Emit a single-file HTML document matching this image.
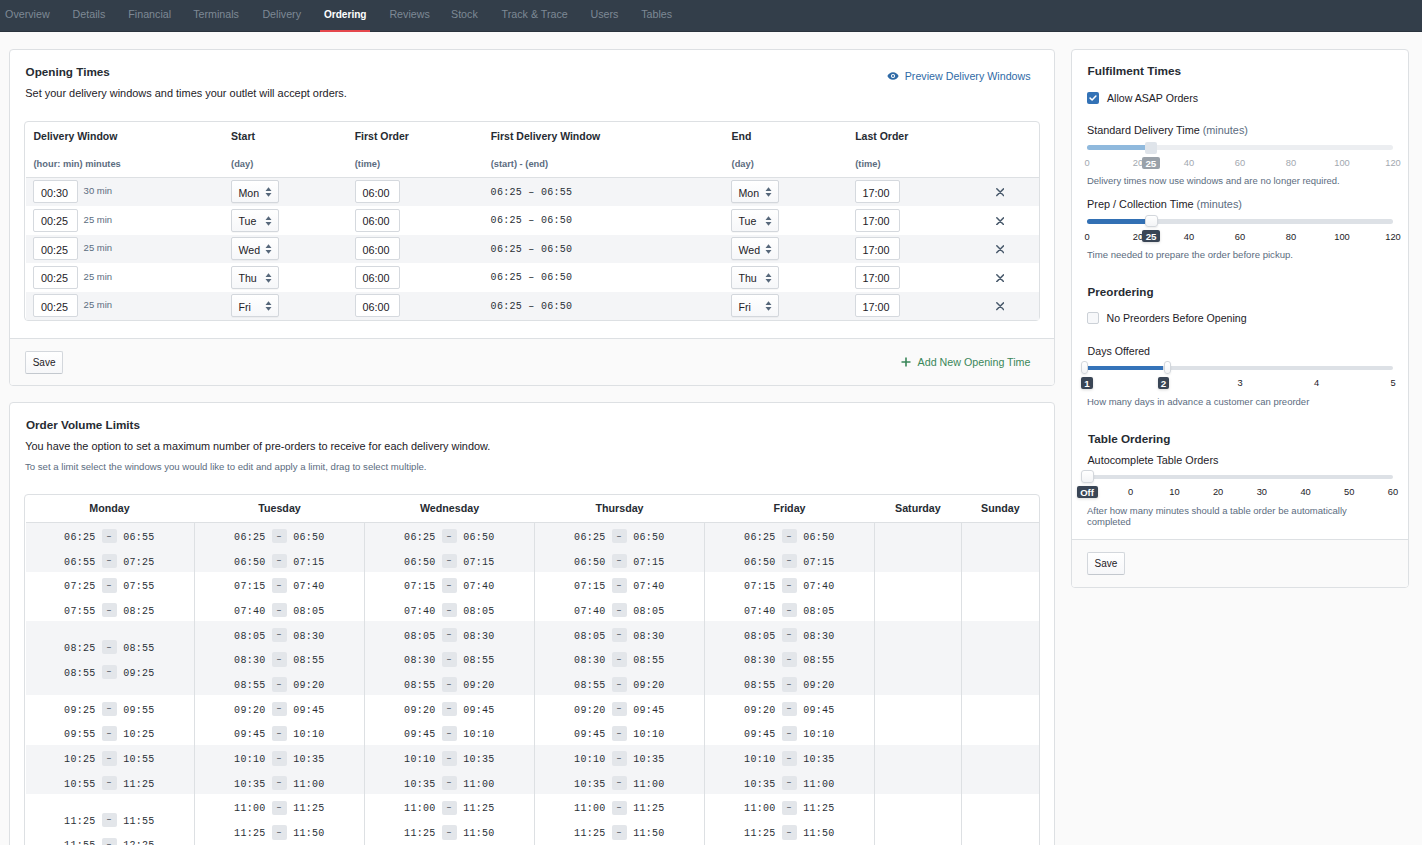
<!DOCTYPE html><html><head><meta charset="utf-8"><style>
html,body{margin:0;padding:0;}
body{width:1422px;height:845px;overflow:hidden;position:relative;background:#fafafa;font-family:"Liberation Sans",sans-serif;}
.t{position:absolute;white-space:nowrap;line-height:1em;}
.b{position:absolute;box-sizing:border-box;}
svg{position:absolute;}
</style></head><body>
<div class="b" style="left:0.00px;top:0.00px;width:1422.00px;height:32.00px;background:#333e4a;"></div>
<div class="b" style="left:0.00px;top:31.00px;width:1422.00px;height:1.00px;background:#2a333d;"></div>
<div class="t" style="left:5.10px;top:8.64px;font-size:10.7px;color:#7e8995;">Overview</div>
<div class="t" style="left:72.60px;top:8.64px;font-size:10.7px;color:#7e8995;">Details</div>
<div class="t" style="left:128.30px;top:8.64px;font-size:10.7px;color:#7e8995;">Financial</div>
<div class="t" style="left:193.20px;top:8.64px;font-size:10.7px;color:#7e8995;">Terminals</div>
<div class="t" style="left:262.40px;top:8.64px;font-size:10.7px;color:#7e8995;">Delivery</div>
<div class="t" style="left:389.40px;top:8.64px;font-size:10.7px;color:#7e8995;">Reviews</div>
<div class="t" style="left:451.00px;top:8.64px;font-size:10.7px;color:#7e8995;">Stock</div>
<div class="t" style="left:501.60px;top:8.64px;font-size:10.7px;color:#7e8995;">Track &amp; Trace</div>
<div class="t" style="left:590.50px;top:8.64px;font-size:10.7px;color:#7e8995;">Users</div>
<div class="t" style="left:641.20px;top:8.64px;font-size:10.7px;color:#7e8995;">Tables</div>
<div class="t" style="left:323.90px;top:9.75px;font-size:10.1px;color:#ffffff;font-weight:700;">Ordering</div>
<div class="b" style="left:320.00px;top:30.00px;width:50.00px;height:2.00px;background:#e5484d;"></div>
<div class="b" style="left:9.00px;top:49.00px;width:1046.00px;height:337.00px;background:#fff;border:1px solid #dde0e3;border-radius:4px;"></div>
<div class="b" style="left:10.00px;top:338.00px;width:1044.00px;height:47.00px;background:#fafafa;border-top:1px solid #dde0e3;border-radius:0 0 3px 3px;"></div>
<div class="t" style="left:25.60px;top:65.80px;font-size:11.7px;color:#262b32;font-weight:700;">Opening Times</div>
<div class="t" style="left:25.30px;top:87.63px;font-size:10.95px;color:#1d2127;">Set your delivery windows and times your outlet will accept orders.</div>
<svg style="left:887px;top:71px" width="12" height="10" viewBox="0 0 12 10"><path d="M6 1.2C3.4 1.2 1.3 3 0.4 5c0.9 2 3 3.8 5.6 3.8S10.7 7 11.6 5C10.7 3 8.6 1.2 6 1.2z" fill="#2f6aa6"/><circle cx="6" cy="5" r="2.1" fill="#fff"/><circle cx="6" cy="5" r="1.1" fill="#2f6aa6"/></svg>
<div class="t" style="left:904.70px;top:70.94px;font-size:10.7px;color:#2f6aa6;">Preview Delivery Windows</div>
<div class="b" style="left:24.20px;top:121.00px;width:1015.80px;height:200.00px;border:1px solid #dde0e3;border-radius:4px;background:#fff;"></div>
<div class="t" style="left:33.50px;top:131.41px;font-size:10.5px;color:#262b32;font-weight:700;">Delivery Window</div>
<div class="t" style="left:33.50px;top:159.93px;font-size:9.3px;color:#5b6c80;font-weight:700;">(hour: min) minutes</div>
<div class="t" style="left:231.10px;top:131.41px;font-size:10.5px;color:#262b32;font-weight:700;">Start</div>
<div class="t" style="left:231.10px;top:159.93px;font-size:9.3px;color:#5b6c80;font-weight:700;">(day)</div>
<div class="t" style="left:354.70px;top:131.41px;font-size:10.5px;color:#262b32;font-weight:700;">First Order</div>
<div class="t" style="left:354.70px;top:159.93px;font-size:9.3px;color:#5b6c80;font-weight:700;">(time)</div>
<div class="t" style="left:490.70px;top:131.41px;font-size:10.5px;color:#262b32;font-weight:700;">First Delivery Window</div>
<div class="t" style="left:490.70px;top:159.93px;font-size:9.3px;color:#5b6c80;font-weight:700;">(start) - (end)</div>
<div class="t" style="left:731.60px;top:131.41px;font-size:10.5px;color:#262b32;font-weight:700;">End</div>
<div class="t" style="left:731.60px;top:159.93px;font-size:9.3px;color:#5b6c80;font-weight:700;">(day)</div>
<div class="t" style="left:855.20px;top:131.41px;font-size:10.5px;color:#262b32;font-weight:700;">Last Order</div>
<div class="t" style="left:855.20px;top:159.93px;font-size:9.3px;color:#5b6c80;font-weight:700;">(time)</div>
<div class="b" style="left:25.50px;top:177.00px;width:1013.50px;height:1.00px;background:#dde0e3;"></div>
<div class="b" style="left:25.50px;top:178.00px;width:1013.50px;height:28.00px;background:#f4f5f7;"></div>
<div class="b" style="left:33.00px;top:180.15px;width:44.50px;height:23.00px;background:#fff;border:1px solid #d5d9de;border-radius:2px;"></div>
<div class="t" style="left:41.00px;top:187.51px;font-size:10.8px;color:#1d2127;">00:30</div>
<div class="t" style="left:83.60px;top:186.21px;font-size:9.5px;color:#5b6c80;">30 min</div>
<div class="b" style="left:231.40px;top:180.15px;width:47.50px;height:23.00px;background:linear-gradient(#fff,#f6f7f9);border:1px solid #d3d7dc;border-radius:2px;box-shadow:0 1px 0 rgba(0,0,0,0.03);"></div>
<div class="t" style="left:238.50px;top:187.68px;font-size:10.6px;color:#1d2127;">Mon</div>
<svg style="left:264.70px;top:187.25px" width="7" height="10" viewBox="0 0 7 10"><path d="M3.5 0.3L6.5 4H0.5z M3.5 9.7L6.5 6H0.5z" fill="#56677a"/></svg>
<div class="b" style="left:731.40px;top:180.15px;width:47.50px;height:23.00px;background:linear-gradient(#fff,#f6f7f9);border:1px solid #d3d7dc;border-radius:2px;box-shadow:0 1px 0 rgba(0,0,0,0.03);"></div>
<div class="t" style="left:738.50px;top:187.68px;font-size:10.6px;color:#1d2127;">Mon</div>
<svg style="left:764.70px;top:187.25px" width="7" height="10" viewBox="0 0 7 10"><path d="M3.5 0.3L6.5 4H0.5z M3.5 9.7L6.5 6H0.5z" fill="#56677a"/></svg>
<div class="b" style="left:355.20px;top:180.15px;width:44.50px;height:23.00px;background:#fff;border:1px solid #d5d9de;border-radius:2px;"></div>
<div class="t" style="left:362.50px;top:187.51px;font-size:10.8px;color:#1d2127;">06:00</div>
<div class="b" style="left:855.20px;top:180.15px;width:44.50px;height:23.00px;background:#fff;border:1px solid #d5d9de;border-radius:2px;"></div>
<div class="t" style="left:862.50px;top:187.51px;font-size:10.8px;color:#1d2127;">17:00</div>
<div class="t" style="left:490.60px;top:187.69px;font-size:10px;color:#2b3137;font-family:'Liberation Mono', monospace;letter-spacing:0.29px;">06:25 – 06:55</div>
<svg style="left:995.8px;top:188.15px" width="8.4" height="8.4" viewBox="0 0 8.4 8.4"><path d="M0.8 0.8L7.6 7.6M7.6 0.8L0.8 7.6" stroke="#48596b" stroke-width="1.5" stroke-linecap="round"/></svg>
<div class="b" style="left:33.00px;top:208.65px;width:44.50px;height:23.00px;background:#fff;border:1px solid #d5d9de;border-radius:2px;"></div>
<div class="t" style="left:41.00px;top:216.01px;font-size:10.8px;color:#1d2127;">00:25</div>
<div class="t" style="left:83.60px;top:214.71px;font-size:9.5px;color:#5b6c80;">25 min</div>
<div class="b" style="left:231.40px;top:208.65px;width:47.50px;height:23.00px;background:linear-gradient(#fff,#f6f7f9);border:1px solid #d3d7dc;border-radius:2px;box-shadow:0 1px 0 rgba(0,0,0,0.03);"></div>
<div class="t" style="left:238.50px;top:216.18px;font-size:10.6px;color:#1d2127;">Tue</div>
<svg style="left:264.70px;top:215.75px" width="7" height="10" viewBox="0 0 7 10"><path d="M3.5 0.3L6.5 4H0.5z M3.5 9.7L6.5 6H0.5z" fill="#56677a"/></svg>
<div class="b" style="left:731.40px;top:208.65px;width:47.50px;height:23.00px;background:linear-gradient(#fff,#f6f7f9);border:1px solid #d3d7dc;border-radius:2px;box-shadow:0 1px 0 rgba(0,0,0,0.03);"></div>
<div class="t" style="left:738.50px;top:216.18px;font-size:10.6px;color:#1d2127;">Tue</div>
<svg style="left:764.70px;top:215.75px" width="7" height="10" viewBox="0 0 7 10"><path d="M3.5 0.3L6.5 4H0.5z M3.5 9.7L6.5 6H0.5z" fill="#56677a"/></svg>
<div class="b" style="left:355.20px;top:208.65px;width:44.50px;height:23.00px;background:#fff;border:1px solid #d5d9de;border-radius:2px;"></div>
<div class="t" style="left:362.50px;top:216.01px;font-size:10.8px;color:#1d2127;">06:00</div>
<div class="b" style="left:855.20px;top:208.65px;width:44.50px;height:23.00px;background:#fff;border:1px solid #d5d9de;border-radius:2px;"></div>
<div class="t" style="left:862.50px;top:216.01px;font-size:10.8px;color:#1d2127;">17:00</div>
<div class="t" style="left:490.60px;top:216.19px;font-size:10px;color:#2b3137;font-family:'Liberation Mono', monospace;letter-spacing:0.29px;">06:25 – 06:50</div>
<svg style="left:995.8px;top:216.65px" width="8.4" height="8.4" viewBox="0 0 8.4 8.4"><path d="M0.8 0.8L7.6 7.6M7.6 0.8L0.8 7.6" stroke="#48596b" stroke-width="1.5" stroke-linecap="round"/></svg>
<div class="b" style="left:25.50px;top:235.00px;width:1013.50px;height:28.00px;background:#f4f5f7;"></div>
<div class="b" style="left:33.00px;top:237.15px;width:44.50px;height:23.00px;background:#fff;border:1px solid #d5d9de;border-radius:2px;"></div>
<div class="t" style="left:41.00px;top:244.51px;font-size:10.8px;color:#1d2127;">00:25</div>
<div class="t" style="left:83.60px;top:243.21px;font-size:9.5px;color:#5b6c80;">25 min</div>
<div class="b" style="left:231.40px;top:237.15px;width:47.50px;height:23.00px;background:linear-gradient(#fff,#f6f7f9);border:1px solid #d3d7dc;border-radius:2px;box-shadow:0 1px 0 rgba(0,0,0,0.03);"></div>
<div class="t" style="left:238.50px;top:244.68px;font-size:10.6px;color:#1d2127;">Wed</div>
<svg style="left:264.70px;top:244.25px" width="7" height="10" viewBox="0 0 7 10"><path d="M3.5 0.3L6.5 4H0.5z M3.5 9.7L6.5 6H0.5z" fill="#56677a"/></svg>
<div class="b" style="left:731.40px;top:237.15px;width:47.50px;height:23.00px;background:linear-gradient(#fff,#f6f7f9);border:1px solid #d3d7dc;border-radius:2px;box-shadow:0 1px 0 rgba(0,0,0,0.03);"></div>
<div class="t" style="left:738.50px;top:244.68px;font-size:10.6px;color:#1d2127;">Wed</div>
<svg style="left:764.70px;top:244.25px" width="7" height="10" viewBox="0 0 7 10"><path d="M3.5 0.3L6.5 4H0.5z M3.5 9.7L6.5 6H0.5z" fill="#56677a"/></svg>
<div class="b" style="left:355.20px;top:237.15px;width:44.50px;height:23.00px;background:#fff;border:1px solid #d5d9de;border-radius:2px;"></div>
<div class="t" style="left:362.50px;top:244.51px;font-size:10.8px;color:#1d2127;">06:00</div>
<div class="b" style="left:855.20px;top:237.15px;width:44.50px;height:23.00px;background:#fff;border:1px solid #d5d9de;border-radius:2px;"></div>
<div class="t" style="left:862.50px;top:244.51px;font-size:10.8px;color:#1d2127;">17:00</div>
<div class="t" style="left:490.60px;top:244.69px;font-size:10px;color:#2b3137;font-family:'Liberation Mono', monospace;letter-spacing:0.29px;">06:25 – 06:50</div>
<svg style="left:995.8px;top:245.15px" width="8.4" height="8.4" viewBox="0 0 8.4 8.4"><path d="M0.8 0.8L7.6 7.6M7.6 0.8L0.8 7.6" stroke="#48596b" stroke-width="1.5" stroke-linecap="round"/></svg>
<div class="b" style="left:33.00px;top:265.65px;width:44.50px;height:23.00px;background:#fff;border:1px solid #d5d9de;border-radius:2px;"></div>
<div class="t" style="left:41.00px;top:273.01px;font-size:10.8px;color:#1d2127;">00:25</div>
<div class="t" style="left:83.60px;top:271.71px;font-size:9.5px;color:#5b6c80;">25 min</div>
<div class="b" style="left:231.40px;top:265.65px;width:47.50px;height:23.00px;background:linear-gradient(#fff,#f6f7f9);border:1px solid #d3d7dc;border-radius:2px;box-shadow:0 1px 0 rgba(0,0,0,0.03);"></div>
<div class="t" style="left:238.50px;top:273.18px;font-size:10.6px;color:#1d2127;">Thu</div>
<svg style="left:264.70px;top:272.75px" width="7" height="10" viewBox="0 0 7 10"><path d="M3.5 0.3L6.5 4H0.5z M3.5 9.7L6.5 6H0.5z" fill="#56677a"/></svg>
<div class="b" style="left:731.40px;top:265.65px;width:47.50px;height:23.00px;background:linear-gradient(#fff,#f6f7f9);border:1px solid #d3d7dc;border-radius:2px;box-shadow:0 1px 0 rgba(0,0,0,0.03);"></div>
<div class="t" style="left:738.50px;top:273.18px;font-size:10.6px;color:#1d2127;">Thu</div>
<svg style="left:764.70px;top:272.75px" width="7" height="10" viewBox="0 0 7 10"><path d="M3.5 0.3L6.5 4H0.5z M3.5 9.7L6.5 6H0.5z" fill="#56677a"/></svg>
<div class="b" style="left:355.20px;top:265.65px;width:44.50px;height:23.00px;background:#fff;border:1px solid #d5d9de;border-radius:2px;"></div>
<div class="t" style="left:362.50px;top:273.01px;font-size:10.8px;color:#1d2127;">06:00</div>
<div class="b" style="left:855.20px;top:265.65px;width:44.50px;height:23.00px;background:#fff;border:1px solid #d5d9de;border-radius:2px;"></div>
<div class="t" style="left:862.50px;top:273.01px;font-size:10.8px;color:#1d2127;">17:00</div>
<div class="t" style="left:490.60px;top:273.19px;font-size:10px;color:#2b3137;font-family:'Liberation Mono', monospace;letter-spacing:0.29px;">06:25 – 06:50</div>
<svg style="left:995.8px;top:273.65px" width="8.4" height="8.4" viewBox="0 0 8.4 8.4"><path d="M0.8 0.8L7.6 7.6M7.6 0.8L0.8 7.6" stroke="#48596b" stroke-width="1.5" stroke-linecap="round"/></svg>
<div class="b" style="left:25.50px;top:292.00px;width:1013.50px;height:28.00px;background:#f4f5f7;"></div>
<div class="b" style="left:33.00px;top:294.15px;width:44.50px;height:23.00px;background:#fff;border:1px solid #d5d9de;border-radius:2px;"></div>
<div class="t" style="left:41.00px;top:301.51px;font-size:10.8px;color:#1d2127;">00:25</div>
<div class="t" style="left:83.60px;top:300.21px;font-size:9.5px;color:#5b6c80;">25 min</div>
<div class="b" style="left:231.40px;top:294.15px;width:47.50px;height:23.00px;background:linear-gradient(#fff,#f6f7f9);border:1px solid #d3d7dc;border-radius:2px;box-shadow:0 1px 0 rgba(0,0,0,0.03);"></div>
<div class="t" style="left:238.50px;top:301.68px;font-size:10.6px;color:#1d2127;">Fri</div>
<svg style="left:264.70px;top:301.25px" width="7" height="10" viewBox="0 0 7 10"><path d="M3.5 0.3L6.5 4H0.5z M3.5 9.7L6.5 6H0.5z" fill="#56677a"/></svg>
<div class="b" style="left:731.40px;top:294.15px;width:47.50px;height:23.00px;background:linear-gradient(#fff,#f6f7f9);border:1px solid #d3d7dc;border-radius:2px;box-shadow:0 1px 0 rgba(0,0,0,0.03);"></div>
<div class="t" style="left:738.50px;top:301.68px;font-size:10.6px;color:#1d2127;">Fri</div>
<svg style="left:764.70px;top:301.25px" width="7" height="10" viewBox="0 0 7 10"><path d="M3.5 0.3L6.5 4H0.5z M3.5 9.7L6.5 6H0.5z" fill="#56677a"/></svg>
<div class="b" style="left:355.20px;top:294.15px;width:44.50px;height:23.00px;background:#fff;border:1px solid #d5d9de;border-radius:2px;"></div>
<div class="t" style="left:362.50px;top:301.51px;font-size:10.8px;color:#1d2127;">06:00</div>
<div class="b" style="left:855.20px;top:294.15px;width:44.50px;height:23.00px;background:#fff;border:1px solid #d5d9de;border-radius:2px;"></div>
<div class="t" style="left:862.50px;top:301.51px;font-size:10.8px;color:#1d2127;">17:00</div>
<div class="t" style="left:490.60px;top:301.69px;font-size:10px;color:#2b3137;font-family:'Liberation Mono', monospace;letter-spacing:0.29px;">06:25 – 06:50</div>
<svg style="left:995.8px;top:302.15px" width="8.4" height="8.4" viewBox="0 0 8.4 8.4"><path d="M0.8 0.8L7.6 7.6M7.6 0.8L0.8 7.6" stroke="#48596b" stroke-width="1.5" stroke-linecap="round"/></svg>
<div class="b" style="left:25.00px;top:351.00px;width:37.80px;height:22.50px;background:linear-gradient(#fff,#f6f7f9);border:1px solid #d3d7dc;border-bottom-color:#c3c8ce;border-radius:2px;"></div>
<div class="t" style="left:32.70px;top:357.54px;font-size:10px;color:#1d2127;">Save</div>
<svg style="left:901px;top:357px" width="10" height="10" viewBox="0 0 10 10"><path d="M5 0.5V9.5M0.5 5H9.5" stroke="#3a8759" stroke-width="1.6"/></svg>
<div class="t" style="left:917.60px;top:356.74px;font-size:10.7px;color:#3a8759;">Add New Opening Time</div>
<div class="b" style="left:9.00px;top:402.00px;width:1046.00px;height:498.00px;background:#fff;border:1px solid #dde0e3;border-radius:4px;"></div>
<div class="t" style="left:25.90px;top:419.00px;font-size:11.7px;color:#262b32;font-weight:700;">Order Volume Limits</div>
<div class="t" style="left:25.20px;top:440.97px;font-size:10.9px;color:#1d2127;">You have the option to set a maximum number of pre-orders to receive for each delivery window.</div>
<div class="t" style="left:25.00px;top:462.37px;font-size:9.6px;color:#5b6c80;">To set a limit select the windows you would like to edit and apply a limit, drag to select multiple.</div>
<div class="b" style="left:24.20px;top:493.50px;width:1015.80px;height:406.50px;border:1px solid #dde0e3;border-radius:4px;background:#fff;"></div>
<div class="t" style="left:24.50px;width:170.00px;text-align:center;top:502.94px;font-size:10.7px;color:#262b32;font-weight:700;">Monday</div>
<div class="t" style="left:194.50px;width:170.00px;text-align:center;top:502.94px;font-size:10.7px;color:#262b32;font-weight:700;">Tuesday</div>
<div class="t" style="left:364.50px;width:170.00px;text-align:center;top:502.94px;font-size:10.7px;color:#262b32;font-weight:700;">Wednesday</div>
<div class="t" style="left:534.50px;width:170.00px;text-align:center;top:502.94px;font-size:10.7px;color:#262b32;font-weight:700;">Thursday</div>
<div class="t" style="left:704.50px;width:170.00px;text-align:center;top:502.94px;font-size:10.7px;color:#262b32;font-weight:700;">Friday</div>
<div class="t" style="left:874.50px;width:86.80px;text-align:center;top:502.94px;font-size:10.7px;color:#262b32;font-weight:700;">Saturday</div>
<div class="t" style="left:961.30px;width:78.20px;text-align:center;top:502.94px;font-size:10.7px;color:#262b32;font-weight:700;">Sunday</div>
<div class="b" style="left:25.50px;top:522.00px;width:1013.50px;height:1.00px;background:#dde0e3;"></div>
<div class="b" style="left:25.50px;top:522.60px;width:1013.50px;height:49.36px;background:#f4f5f7;"></div>
<div class="b" style="left:102.25px;top:529.04px;width:14.50px;height:14.40px;background:#e3e6ea;border-radius:2px;"></div>
<div class="t" style="left:106.35px;top:532.55px;font-size:9px;color:#3b4450;font-family:'Liberation Mono', monospace;">–</div>
<div class="t" style="left:64.10px;top:532.98px;font-size:10px;color:#2b3137;font-family:'Liberation Mono', monospace;letter-spacing:0.29px;">06:25</div>
<div class="t" style="left:123.20px;top:532.98px;font-size:10px;color:#2b3137;font-family:'Liberation Mono', monospace;letter-spacing:0.29px;">06:55</div>
<div class="b" style="left:102.25px;top:553.72px;width:14.50px;height:14.40px;background:#e3e6ea;border-radius:2px;"></div>
<div class="t" style="left:106.35px;top:557.23px;font-size:9px;color:#3b4450;font-family:'Liberation Mono', monospace;">–</div>
<div class="t" style="left:64.10px;top:557.66px;font-size:10px;color:#2b3137;font-family:'Liberation Mono', monospace;letter-spacing:0.29px;">06:55</div>
<div class="t" style="left:123.20px;top:557.66px;font-size:10px;color:#2b3137;font-family:'Liberation Mono', monospace;letter-spacing:0.29px;">07:25</div>
<div class="b" style="left:272.25px;top:529.04px;width:14.50px;height:14.40px;background:#e3e6ea;border-radius:2px;"></div>
<div class="t" style="left:276.35px;top:532.55px;font-size:9px;color:#3b4450;font-family:'Liberation Mono', monospace;">–</div>
<div class="t" style="left:234.10px;top:532.98px;font-size:10px;color:#2b3137;font-family:'Liberation Mono', monospace;letter-spacing:0.29px;">06:25</div>
<div class="t" style="left:293.20px;top:532.98px;font-size:10px;color:#2b3137;font-family:'Liberation Mono', monospace;letter-spacing:0.29px;">06:50</div>
<div class="b" style="left:272.25px;top:553.72px;width:14.50px;height:14.40px;background:#e3e6ea;border-radius:2px;"></div>
<div class="t" style="left:276.35px;top:557.23px;font-size:9px;color:#3b4450;font-family:'Liberation Mono', monospace;">–</div>
<div class="t" style="left:234.10px;top:557.66px;font-size:10px;color:#2b3137;font-family:'Liberation Mono', monospace;letter-spacing:0.29px;">06:50</div>
<div class="t" style="left:293.20px;top:557.66px;font-size:10px;color:#2b3137;font-family:'Liberation Mono', monospace;letter-spacing:0.29px;">07:15</div>
<div class="b" style="left:442.25px;top:529.04px;width:14.50px;height:14.40px;background:#e3e6ea;border-radius:2px;"></div>
<div class="t" style="left:446.35px;top:532.55px;font-size:9px;color:#3b4450;font-family:'Liberation Mono', monospace;">–</div>
<div class="t" style="left:404.10px;top:532.98px;font-size:10px;color:#2b3137;font-family:'Liberation Mono', monospace;letter-spacing:0.29px;">06:25</div>
<div class="t" style="left:463.20px;top:532.98px;font-size:10px;color:#2b3137;font-family:'Liberation Mono', monospace;letter-spacing:0.29px;">06:50</div>
<div class="b" style="left:442.25px;top:553.72px;width:14.50px;height:14.40px;background:#e3e6ea;border-radius:2px;"></div>
<div class="t" style="left:446.35px;top:557.23px;font-size:9px;color:#3b4450;font-family:'Liberation Mono', monospace;">–</div>
<div class="t" style="left:404.10px;top:557.66px;font-size:10px;color:#2b3137;font-family:'Liberation Mono', monospace;letter-spacing:0.29px;">06:50</div>
<div class="t" style="left:463.20px;top:557.66px;font-size:10px;color:#2b3137;font-family:'Liberation Mono', monospace;letter-spacing:0.29px;">07:15</div>
<div class="b" style="left:612.25px;top:529.04px;width:14.50px;height:14.40px;background:#e3e6ea;border-radius:2px;"></div>
<div class="t" style="left:616.35px;top:532.55px;font-size:9px;color:#3b4450;font-family:'Liberation Mono', monospace;">–</div>
<div class="t" style="left:574.10px;top:532.98px;font-size:10px;color:#2b3137;font-family:'Liberation Mono', monospace;letter-spacing:0.29px;">06:25</div>
<div class="t" style="left:633.20px;top:532.98px;font-size:10px;color:#2b3137;font-family:'Liberation Mono', monospace;letter-spacing:0.29px;">06:50</div>
<div class="b" style="left:612.25px;top:553.72px;width:14.50px;height:14.40px;background:#e3e6ea;border-radius:2px;"></div>
<div class="t" style="left:616.35px;top:557.23px;font-size:9px;color:#3b4450;font-family:'Liberation Mono', monospace;">–</div>
<div class="t" style="left:574.10px;top:557.66px;font-size:10px;color:#2b3137;font-family:'Liberation Mono', monospace;letter-spacing:0.29px;">06:50</div>
<div class="t" style="left:633.20px;top:557.66px;font-size:10px;color:#2b3137;font-family:'Liberation Mono', monospace;letter-spacing:0.29px;">07:15</div>
<div class="b" style="left:782.25px;top:529.04px;width:14.50px;height:14.40px;background:#e3e6ea;border-radius:2px;"></div>
<div class="t" style="left:786.35px;top:532.55px;font-size:9px;color:#3b4450;font-family:'Liberation Mono', monospace;">–</div>
<div class="t" style="left:744.10px;top:532.98px;font-size:10px;color:#2b3137;font-family:'Liberation Mono', monospace;letter-spacing:0.29px;">06:25</div>
<div class="t" style="left:803.20px;top:532.98px;font-size:10px;color:#2b3137;font-family:'Liberation Mono', monospace;letter-spacing:0.29px;">06:50</div>
<div class="b" style="left:782.25px;top:553.72px;width:14.50px;height:14.40px;background:#e3e6ea;border-radius:2px;"></div>
<div class="t" style="left:786.35px;top:557.23px;font-size:9px;color:#3b4450;font-family:'Liberation Mono', monospace;">–</div>
<div class="t" style="left:744.10px;top:557.66px;font-size:10px;color:#2b3137;font-family:'Liberation Mono', monospace;letter-spacing:0.29px;">06:50</div>
<div class="t" style="left:803.20px;top:557.66px;font-size:10px;color:#2b3137;font-family:'Liberation Mono', monospace;letter-spacing:0.29px;">07:15</div>
<div class="b" style="left:102.25px;top:578.40px;width:14.50px;height:14.40px;background:#e3e6ea;border-radius:2px;"></div>
<div class="t" style="left:106.35px;top:581.91px;font-size:9px;color:#3b4450;font-family:'Liberation Mono', monospace;">–</div>
<div class="t" style="left:64.10px;top:582.34px;font-size:10px;color:#2b3137;font-family:'Liberation Mono', monospace;letter-spacing:0.29px;">07:25</div>
<div class="t" style="left:123.20px;top:582.34px;font-size:10px;color:#2b3137;font-family:'Liberation Mono', monospace;letter-spacing:0.29px;">07:55</div>
<div class="b" style="left:102.25px;top:603.08px;width:14.50px;height:14.40px;background:#e3e6ea;border-radius:2px;"></div>
<div class="t" style="left:106.35px;top:606.59px;font-size:9px;color:#3b4450;font-family:'Liberation Mono', monospace;">–</div>
<div class="t" style="left:64.10px;top:607.02px;font-size:10px;color:#2b3137;font-family:'Liberation Mono', monospace;letter-spacing:0.29px;">07:55</div>
<div class="t" style="left:123.20px;top:607.02px;font-size:10px;color:#2b3137;font-family:'Liberation Mono', monospace;letter-spacing:0.29px;">08:25</div>
<div class="b" style="left:272.25px;top:578.40px;width:14.50px;height:14.40px;background:#e3e6ea;border-radius:2px;"></div>
<div class="t" style="left:276.35px;top:581.91px;font-size:9px;color:#3b4450;font-family:'Liberation Mono', monospace;">–</div>
<div class="t" style="left:234.10px;top:582.34px;font-size:10px;color:#2b3137;font-family:'Liberation Mono', monospace;letter-spacing:0.29px;">07:15</div>
<div class="t" style="left:293.20px;top:582.34px;font-size:10px;color:#2b3137;font-family:'Liberation Mono', monospace;letter-spacing:0.29px;">07:40</div>
<div class="b" style="left:272.25px;top:603.08px;width:14.50px;height:14.40px;background:#e3e6ea;border-radius:2px;"></div>
<div class="t" style="left:276.35px;top:606.59px;font-size:9px;color:#3b4450;font-family:'Liberation Mono', monospace;">–</div>
<div class="t" style="left:234.10px;top:607.02px;font-size:10px;color:#2b3137;font-family:'Liberation Mono', monospace;letter-spacing:0.29px;">07:40</div>
<div class="t" style="left:293.20px;top:607.02px;font-size:10px;color:#2b3137;font-family:'Liberation Mono', monospace;letter-spacing:0.29px;">08:05</div>
<div class="b" style="left:442.25px;top:578.40px;width:14.50px;height:14.40px;background:#e3e6ea;border-radius:2px;"></div>
<div class="t" style="left:446.35px;top:581.91px;font-size:9px;color:#3b4450;font-family:'Liberation Mono', monospace;">–</div>
<div class="t" style="left:404.10px;top:582.34px;font-size:10px;color:#2b3137;font-family:'Liberation Mono', monospace;letter-spacing:0.29px;">07:15</div>
<div class="t" style="left:463.20px;top:582.34px;font-size:10px;color:#2b3137;font-family:'Liberation Mono', monospace;letter-spacing:0.29px;">07:40</div>
<div class="b" style="left:442.25px;top:603.08px;width:14.50px;height:14.40px;background:#e3e6ea;border-radius:2px;"></div>
<div class="t" style="left:446.35px;top:606.59px;font-size:9px;color:#3b4450;font-family:'Liberation Mono', monospace;">–</div>
<div class="t" style="left:404.10px;top:607.02px;font-size:10px;color:#2b3137;font-family:'Liberation Mono', monospace;letter-spacing:0.29px;">07:40</div>
<div class="t" style="left:463.20px;top:607.02px;font-size:10px;color:#2b3137;font-family:'Liberation Mono', monospace;letter-spacing:0.29px;">08:05</div>
<div class="b" style="left:612.25px;top:578.40px;width:14.50px;height:14.40px;background:#e3e6ea;border-radius:2px;"></div>
<div class="t" style="left:616.35px;top:581.91px;font-size:9px;color:#3b4450;font-family:'Liberation Mono', monospace;">–</div>
<div class="t" style="left:574.10px;top:582.34px;font-size:10px;color:#2b3137;font-family:'Liberation Mono', monospace;letter-spacing:0.29px;">07:15</div>
<div class="t" style="left:633.20px;top:582.34px;font-size:10px;color:#2b3137;font-family:'Liberation Mono', monospace;letter-spacing:0.29px;">07:40</div>
<div class="b" style="left:612.25px;top:603.08px;width:14.50px;height:14.40px;background:#e3e6ea;border-radius:2px;"></div>
<div class="t" style="left:616.35px;top:606.59px;font-size:9px;color:#3b4450;font-family:'Liberation Mono', monospace;">–</div>
<div class="t" style="left:574.10px;top:607.02px;font-size:10px;color:#2b3137;font-family:'Liberation Mono', monospace;letter-spacing:0.29px;">07:40</div>
<div class="t" style="left:633.20px;top:607.02px;font-size:10px;color:#2b3137;font-family:'Liberation Mono', monospace;letter-spacing:0.29px;">08:05</div>
<div class="b" style="left:782.25px;top:578.40px;width:14.50px;height:14.40px;background:#e3e6ea;border-radius:2px;"></div>
<div class="t" style="left:786.35px;top:581.91px;font-size:9px;color:#3b4450;font-family:'Liberation Mono', monospace;">–</div>
<div class="t" style="left:744.10px;top:582.34px;font-size:10px;color:#2b3137;font-family:'Liberation Mono', monospace;letter-spacing:0.29px;">07:15</div>
<div class="t" style="left:803.20px;top:582.34px;font-size:10px;color:#2b3137;font-family:'Liberation Mono', monospace;letter-spacing:0.29px;">07:40</div>
<div class="b" style="left:782.25px;top:603.08px;width:14.50px;height:14.40px;background:#e3e6ea;border-radius:2px;"></div>
<div class="t" style="left:786.35px;top:606.59px;font-size:9px;color:#3b4450;font-family:'Liberation Mono', monospace;">–</div>
<div class="t" style="left:744.10px;top:607.02px;font-size:10px;color:#2b3137;font-family:'Liberation Mono', monospace;letter-spacing:0.29px;">07:40</div>
<div class="t" style="left:803.20px;top:607.02px;font-size:10px;color:#2b3137;font-family:'Liberation Mono', monospace;letter-spacing:0.29px;">08:05</div>
<div class="b" style="left:25.50px;top:621.32px;width:1013.50px;height:74.04px;background:#f4f5f7;"></div>
<div class="b" style="left:102.25px;top:640.10px;width:14.50px;height:14.40px;background:#e3e6ea;border-radius:2px;"></div>
<div class="t" style="left:106.35px;top:643.61px;font-size:9px;color:#3b4450;font-family:'Liberation Mono', monospace;">–</div>
<div class="t" style="left:64.10px;top:644.04px;font-size:10px;color:#2b3137;font-family:'Liberation Mono', monospace;letter-spacing:0.29px;">08:25</div>
<div class="t" style="left:123.20px;top:644.04px;font-size:10px;color:#2b3137;font-family:'Liberation Mono', monospace;letter-spacing:0.29px;">08:55</div>
<div class="b" style="left:102.25px;top:664.78px;width:14.50px;height:14.40px;background:#e3e6ea;border-radius:2px;"></div>
<div class="t" style="left:106.35px;top:668.29px;font-size:9px;color:#3b4450;font-family:'Liberation Mono', monospace;">–</div>
<div class="t" style="left:64.10px;top:668.72px;font-size:10px;color:#2b3137;font-family:'Liberation Mono', monospace;letter-spacing:0.29px;">08:55</div>
<div class="t" style="left:123.20px;top:668.72px;font-size:10px;color:#2b3137;font-family:'Liberation Mono', monospace;letter-spacing:0.29px;">09:25</div>
<div class="b" style="left:272.25px;top:627.76px;width:14.50px;height:14.40px;background:#e3e6ea;border-radius:2px;"></div>
<div class="t" style="left:276.35px;top:631.27px;font-size:9px;color:#3b4450;font-family:'Liberation Mono', monospace;">–</div>
<div class="t" style="left:234.10px;top:631.70px;font-size:10px;color:#2b3137;font-family:'Liberation Mono', monospace;letter-spacing:0.29px;">08:05</div>
<div class="t" style="left:293.20px;top:631.70px;font-size:10px;color:#2b3137;font-family:'Liberation Mono', monospace;letter-spacing:0.29px;">08:30</div>
<div class="b" style="left:272.25px;top:652.44px;width:14.50px;height:14.40px;background:#e3e6ea;border-radius:2px;"></div>
<div class="t" style="left:276.35px;top:655.95px;font-size:9px;color:#3b4450;font-family:'Liberation Mono', monospace;">–</div>
<div class="t" style="left:234.10px;top:656.38px;font-size:10px;color:#2b3137;font-family:'Liberation Mono', monospace;letter-spacing:0.29px;">08:30</div>
<div class="t" style="left:293.20px;top:656.38px;font-size:10px;color:#2b3137;font-family:'Liberation Mono', monospace;letter-spacing:0.29px;">08:55</div>
<div class="b" style="left:272.25px;top:677.12px;width:14.50px;height:14.40px;background:#e3e6ea;border-radius:2px;"></div>
<div class="t" style="left:276.35px;top:680.63px;font-size:9px;color:#3b4450;font-family:'Liberation Mono', monospace;">–</div>
<div class="t" style="left:234.10px;top:681.06px;font-size:10px;color:#2b3137;font-family:'Liberation Mono', monospace;letter-spacing:0.29px;">08:55</div>
<div class="t" style="left:293.20px;top:681.06px;font-size:10px;color:#2b3137;font-family:'Liberation Mono', monospace;letter-spacing:0.29px;">09:20</div>
<div class="b" style="left:442.25px;top:627.76px;width:14.50px;height:14.40px;background:#e3e6ea;border-radius:2px;"></div>
<div class="t" style="left:446.35px;top:631.27px;font-size:9px;color:#3b4450;font-family:'Liberation Mono', monospace;">–</div>
<div class="t" style="left:404.10px;top:631.70px;font-size:10px;color:#2b3137;font-family:'Liberation Mono', monospace;letter-spacing:0.29px;">08:05</div>
<div class="t" style="left:463.20px;top:631.70px;font-size:10px;color:#2b3137;font-family:'Liberation Mono', monospace;letter-spacing:0.29px;">08:30</div>
<div class="b" style="left:442.25px;top:652.44px;width:14.50px;height:14.40px;background:#e3e6ea;border-radius:2px;"></div>
<div class="t" style="left:446.35px;top:655.95px;font-size:9px;color:#3b4450;font-family:'Liberation Mono', monospace;">–</div>
<div class="t" style="left:404.10px;top:656.38px;font-size:10px;color:#2b3137;font-family:'Liberation Mono', monospace;letter-spacing:0.29px;">08:30</div>
<div class="t" style="left:463.20px;top:656.38px;font-size:10px;color:#2b3137;font-family:'Liberation Mono', monospace;letter-spacing:0.29px;">08:55</div>
<div class="b" style="left:442.25px;top:677.12px;width:14.50px;height:14.40px;background:#e3e6ea;border-radius:2px;"></div>
<div class="t" style="left:446.35px;top:680.63px;font-size:9px;color:#3b4450;font-family:'Liberation Mono', monospace;">–</div>
<div class="t" style="left:404.10px;top:681.06px;font-size:10px;color:#2b3137;font-family:'Liberation Mono', monospace;letter-spacing:0.29px;">08:55</div>
<div class="t" style="left:463.20px;top:681.06px;font-size:10px;color:#2b3137;font-family:'Liberation Mono', monospace;letter-spacing:0.29px;">09:20</div>
<div class="b" style="left:612.25px;top:627.76px;width:14.50px;height:14.40px;background:#e3e6ea;border-radius:2px;"></div>
<div class="t" style="left:616.35px;top:631.27px;font-size:9px;color:#3b4450;font-family:'Liberation Mono', monospace;">–</div>
<div class="t" style="left:574.10px;top:631.70px;font-size:10px;color:#2b3137;font-family:'Liberation Mono', monospace;letter-spacing:0.29px;">08:05</div>
<div class="t" style="left:633.20px;top:631.70px;font-size:10px;color:#2b3137;font-family:'Liberation Mono', monospace;letter-spacing:0.29px;">08:30</div>
<div class="b" style="left:612.25px;top:652.44px;width:14.50px;height:14.40px;background:#e3e6ea;border-radius:2px;"></div>
<div class="t" style="left:616.35px;top:655.95px;font-size:9px;color:#3b4450;font-family:'Liberation Mono', monospace;">–</div>
<div class="t" style="left:574.10px;top:656.38px;font-size:10px;color:#2b3137;font-family:'Liberation Mono', monospace;letter-spacing:0.29px;">08:30</div>
<div class="t" style="left:633.20px;top:656.38px;font-size:10px;color:#2b3137;font-family:'Liberation Mono', monospace;letter-spacing:0.29px;">08:55</div>
<div class="b" style="left:612.25px;top:677.12px;width:14.50px;height:14.40px;background:#e3e6ea;border-radius:2px;"></div>
<div class="t" style="left:616.35px;top:680.63px;font-size:9px;color:#3b4450;font-family:'Liberation Mono', monospace;">–</div>
<div class="t" style="left:574.10px;top:681.06px;font-size:10px;color:#2b3137;font-family:'Liberation Mono', monospace;letter-spacing:0.29px;">08:55</div>
<div class="t" style="left:633.20px;top:681.06px;font-size:10px;color:#2b3137;font-family:'Liberation Mono', monospace;letter-spacing:0.29px;">09:20</div>
<div class="b" style="left:782.25px;top:627.76px;width:14.50px;height:14.40px;background:#e3e6ea;border-radius:2px;"></div>
<div class="t" style="left:786.35px;top:631.27px;font-size:9px;color:#3b4450;font-family:'Liberation Mono', monospace;">–</div>
<div class="t" style="left:744.10px;top:631.70px;font-size:10px;color:#2b3137;font-family:'Liberation Mono', monospace;letter-spacing:0.29px;">08:05</div>
<div class="t" style="left:803.20px;top:631.70px;font-size:10px;color:#2b3137;font-family:'Liberation Mono', monospace;letter-spacing:0.29px;">08:30</div>
<div class="b" style="left:782.25px;top:652.44px;width:14.50px;height:14.40px;background:#e3e6ea;border-radius:2px;"></div>
<div class="t" style="left:786.35px;top:655.95px;font-size:9px;color:#3b4450;font-family:'Liberation Mono', monospace;">–</div>
<div class="t" style="left:744.10px;top:656.38px;font-size:10px;color:#2b3137;font-family:'Liberation Mono', monospace;letter-spacing:0.29px;">08:30</div>
<div class="t" style="left:803.20px;top:656.38px;font-size:10px;color:#2b3137;font-family:'Liberation Mono', monospace;letter-spacing:0.29px;">08:55</div>
<div class="b" style="left:782.25px;top:677.12px;width:14.50px;height:14.40px;background:#e3e6ea;border-radius:2px;"></div>
<div class="t" style="left:786.35px;top:680.63px;font-size:9px;color:#3b4450;font-family:'Liberation Mono', monospace;">–</div>
<div class="t" style="left:744.10px;top:681.06px;font-size:10px;color:#2b3137;font-family:'Liberation Mono', monospace;letter-spacing:0.29px;">08:55</div>
<div class="t" style="left:803.20px;top:681.06px;font-size:10px;color:#2b3137;font-family:'Liberation Mono', monospace;letter-spacing:0.29px;">09:20</div>
<div class="b" style="left:102.25px;top:701.80px;width:14.50px;height:14.40px;background:#e3e6ea;border-radius:2px;"></div>
<div class="t" style="left:106.35px;top:705.31px;font-size:9px;color:#3b4450;font-family:'Liberation Mono', monospace;">–</div>
<div class="t" style="left:64.10px;top:705.74px;font-size:10px;color:#2b3137;font-family:'Liberation Mono', monospace;letter-spacing:0.29px;">09:25</div>
<div class="t" style="left:123.20px;top:705.74px;font-size:10px;color:#2b3137;font-family:'Liberation Mono', monospace;letter-spacing:0.29px;">09:55</div>
<div class="b" style="left:102.25px;top:726.48px;width:14.50px;height:14.40px;background:#e3e6ea;border-radius:2px;"></div>
<div class="t" style="left:106.35px;top:729.99px;font-size:9px;color:#3b4450;font-family:'Liberation Mono', monospace;">–</div>
<div class="t" style="left:64.10px;top:730.42px;font-size:10px;color:#2b3137;font-family:'Liberation Mono', monospace;letter-spacing:0.29px;">09:55</div>
<div class="t" style="left:123.20px;top:730.42px;font-size:10px;color:#2b3137;font-family:'Liberation Mono', monospace;letter-spacing:0.29px;">10:25</div>
<div class="b" style="left:272.25px;top:701.80px;width:14.50px;height:14.40px;background:#e3e6ea;border-radius:2px;"></div>
<div class="t" style="left:276.35px;top:705.31px;font-size:9px;color:#3b4450;font-family:'Liberation Mono', monospace;">–</div>
<div class="t" style="left:234.10px;top:705.74px;font-size:10px;color:#2b3137;font-family:'Liberation Mono', monospace;letter-spacing:0.29px;">09:20</div>
<div class="t" style="left:293.20px;top:705.74px;font-size:10px;color:#2b3137;font-family:'Liberation Mono', monospace;letter-spacing:0.29px;">09:45</div>
<div class="b" style="left:272.25px;top:726.48px;width:14.50px;height:14.40px;background:#e3e6ea;border-radius:2px;"></div>
<div class="t" style="left:276.35px;top:729.99px;font-size:9px;color:#3b4450;font-family:'Liberation Mono', monospace;">–</div>
<div class="t" style="left:234.10px;top:730.42px;font-size:10px;color:#2b3137;font-family:'Liberation Mono', monospace;letter-spacing:0.29px;">09:45</div>
<div class="t" style="left:293.20px;top:730.42px;font-size:10px;color:#2b3137;font-family:'Liberation Mono', monospace;letter-spacing:0.29px;">10:10</div>
<div class="b" style="left:442.25px;top:701.80px;width:14.50px;height:14.40px;background:#e3e6ea;border-radius:2px;"></div>
<div class="t" style="left:446.35px;top:705.31px;font-size:9px;color:#3b4450;font-family:'Liberation Mono', monospace;">–</div>
<div class="t" style="left:404.10px;top:705.74px;font-size:10px;color:#2b3137;font-family:'Liberation Mono', monospace;letter-spacing:0.29px;">09:20</div>
<div class="t" style="left:463.20px;top:705.74px;font-size:10px;color:#2b3137;font-family:'Liberation Mono', monospace;letter-spacing:0.29px;">09:45</div>
<div class="b" style="left:442.25px;top:726.48px;width:14.50px;height:14.40px;background:#e3e6ea;border-radius:2px;"></div>
<div class="t" style="left:446.35px;top:729.99px;font-size:9px;color:#3b4450;font-family:'Liberation Mono', monospace;">–</div>
<div class="t" style="left:404.10px;top:730.42px;font-size:10px;color:#2b3137;font-family:'Liberation Mono', monospace;letter-spacing:0.29px;">09:45</div>
<div class="t" style="left:463.20px;top:730.42px;font-size:10px;color:#2b3137;font-family:'Liberation Mono', monospace;letter-spacing:0.29px;">10:10</div>
<div class="b" style="left:612.25px;top:701.80px;width:14.50px;height:14.40px;background:#e3e6ea;border-radius:2px;"></div>
<div class="t" style="left:616.35px;top:705.31px;font-size:9px;color:#3b4450;font-family:'Liberation Mono', monospace;">–</div>
<div class="t" style="left:574.10px;top:705.74px;font-size:10px;color:#2b3137;font-family:'Liberation Mono', monospace;letter-spacing:0.29px;">09:20</div>
<div class="t" style="left:633.20px;top:705.74px;font-size:10px;color:#2b3137;font-family:'Liberation Mono', monospace;letter-spacing:0.29px;">09:45</div>
<div class="b" style="left:612.25px;top:726.48px;width:14.50px;height:14.40px;background:#e3e6ea;border-radius:2px;"></div>
<div class="t" style="left:616.35px;top:729.99px;font-size:9px;color:#3b4450;font-family:'Liberation Mono', monospace;">–</div>
<div class="t" style="left:574.10px;top:730.42px;font-size:10px;color:#2b3137;font-family:'Liberation Mono', monospace;letter-spacing:0.29px;">09:45</div>
<div class="t" style="left:633.20px;top:730.42px;font-size:10px;color:#2b3137;font-family:'Liberation Mono', monospace;letter-spacing:0.29px;">10:10</div>
<div class="b" style="left:782.25px;top:701.80px;width:14.50px;height:14.40px;background:#e3e6ea;border-radius:2px;"></div>
<div class="t" style="left:786.35px;top:705.31px;font-size:9px;color:#3b4450;font-family:'Liberation Mono', monospace;">–</div>
<div class="t" style="left:744.10px;top:705.74px;font-size:10px;color:#2b3137;font-family:'Liberation Mono', monospace;letter-spacing:0.29px;">09:20</div>
<div class="t" style="left:803.20px;top:705.74px;font-size:10px;color:#2b3137;font-family:'Liberation Mono', monospace;letter-spacing:0.29px;">09:45</div>
<div class="b" style="left:782.25px;top:726.48px;width:14.50px;height:14.40px;background:#e3e6ea;border-radius:2px;"></div>
<div class="t" style="left:786.35px;top:729.99px;font-size:9px;color:#3b4450;font-family:'Liberation Mono', monospace;">–</div>
<div class="t" style="left:744.10px;top:730.42px;font-size:10px;color:#2b3137;font-family:'Liberation Mono', monospace;letter-spacing:0.29px;">09:45</div>
<div class="t" style="left:803.20px;top:730.42px;font-size:10px;color:#2b3137;font-family:'Liberation Mono', monospace;letter-spacing:0.29px;">10:10</div>
<div class="b" style="left:25.50px;top:744.72px;width:1013.50px;height:49.36px;background:#f4f5f7;"></div>
<div class="b" style="left:102.25px;top:751.16px;width:14.50px;height:14.40px;background:#e3e6ea;border-radius:2px;"></div>
<div class="t" style="left:106.35px;top:754.67px;font-size:9px;color:#3b4450;font-family:'Liberation Mono', monospace;">–</div>
<div class="t" style="left:64.10px;top:755.10px;font-size:10px;color:#2b3137;font-family:'Liberation Mono', monospace;letter-spacing:0.29px;">10:25</div>
<div class="t" style="left:123.20px;top:755.10px;font-size:10px;color:#2b3137;font-family:'Liberation Mono', monospace;letter-spacing:0.29px;">10:55</div>
<div class="b" style="left:102.25px;top:775.84px;width:14.50px;height:14.40px;background:#e3e6ea;border-radius:2px;"></div>
<div class="t" style="left:106.35px;top:779.35px;font-size:9px;color:#3b4450;font-family:'Liberation Mono', monospace;">–</div>
<div class="t" style="left:64.10px;top:779.78px;font-size:10px;color:#2b3137;font-family:'Liberation Mono', monospace;letter-spacing:0.29px;">10:55</div>
<div class="t" style="left:123.20px;top:779.78px;font-size:10px;color:#2b3137;font-family:'Liberation Mono', monospace;letter-spacing:0.29px;">11:25</div>
<div class="b" style="left:272.25px;top:751.16px;width:14.50px;height:14.40px;background:#e3e6ea;border-radius:2px;"></div>
<div class="t" style="left:276.35px;top:754.67px;font-size:9px;color:#3b4450;font-family:'Liberation Mono', monospace;">–</div>
<div class="t" style="left:234.10px;top:755.10px;font-size:10px;color:#2b3137;font-family:'Liberation Mono', monospace;letter-spacing:0.29px;">10:10</div>
<div class="t" style="left:293.20px;top:755.10px;font-size:10px;color:#2b3137;font-family:'Liberation Mono', monospace;letter-spacing:0.29px;">10:35</div>
<div class="b" style="left:272.25px;top:775.84px;width:14.50px;height:14.40px;background:#e3e6ea;border-radius:2px;"></div>
<div class="t" style="left:276.35px;top:779.35px;font-size:9px;color:#3b4450;font-family:'Liberation Mono', monospace;">–</div>
<div class="t" style="left:234.10px;top:779.78px;font-size:10px;color:#2b3137;font-family:'Liberation Mono', monospace;letter-spacing:0.29px;">10:35</div>
<div class="t" style="left:293.20px;top:779.78px;font-size:10px;color:#2b3137;font-family:'Liberation Mono', monospace;letter-spacing:0.29px;">11:00</div>
<div class="b" style="left:442.25px;top:751.16px;width:14.50px;height:14.40px;background:#e3e6ea;border-radius:2px;"></div>
<div class="t" style="left:446.35px;top:754.67px;font-size:9px;color:#3b4450;font-family:'Liberation Mono', monospace;">–</div>
<div class="t" style="left:404.10px;top:755.10px;font-size:10px;color:#2b3137;font-family:'Liberation Mono', monospace;letter-spacing:0.29px;">10:10</div>
<div class="t" style="left:463.20px;top:755.10px;font-size:10px;color:#2b3137;font-family:'Liberation Mono', monospace;letter-spacing:0.29px;">10:35</div>
<div class="b" style="left:442.25px;top:775.84px;width:14.50px;height:14.40px;background:#e3e6ea;border-radius:2px;"></div>
<div class="t" style="left:446.35px;top:779.35px;font-size:9px;color:#3b4450;font-family:'Liberation Mono', monospace;">–</div>
<div class="t" style="left:404.10px;top:779.78px;font-size:10px;color:#2b3137;font-family:'Liberation Mono', monospace;letter-spacing:0.29px;">10:35</div>
<div class="t" style="left:463.20px;top:779.78px;font-size:10px;color:#2b3137;font-family:'Liberation Mono', monospace;letter-spacing:0.29px;">11:00</div>
<div class="b" style="left:612.25px;top:751.16px;width:14.50px;height:14.40px;background:#e3e6ea;border-radius:2px;"></div>
<div class="t" style="left:616.35px;top:754.67px;font-size:9px;color:#3b4450;font-family:'Liberation Mono', monospace;">–</div>
<div class="t" style="left:574.10px;top:755.10px;font-size:10px;color:#2b3137;font-family:'Liberation Mono', monospace;letter-spacing:0.29px;">10:10</div>
<div class="t" style="left:633.20px;top:755.10px;font-size:10px;color:#2b3137;font-family:'Liberation Mono', monospace;letter-spacing:0.29px;">10:35</div>
<div class="b" style="left:612.25px;top:775.84px;width:14.50px;height:14.40px;background:#e3e6ea;border-radius:2px;"></div>
<div class="t" style="left:616.35px;top:779.35px;font-size:9px;color:#3b4450;font-family:'Liberation Mono', monospace;">–</div>
<div class="t" style="left:574.10px;top:779.78px;font-size:10px;color:#2b3137;font-family:'Liberation Mono', monospace;letter-spacing:0.29px;">10:35</div>
<div class="t" style="left:633.20px;top:779.78px;font-size:10px;color:#2b3137;font-family:'Liberation Mono', monospace;letter-spacing:0.29px;">11:00</div>
<div class="b" style="left:782.25px;top:751.16px;width:14.50px;height:14.40px;background:#e3e6ea;border-radius:2px;"></div>
<div class="t" style="left:786.35px;top:754.67px;font-size:9px;color:#3b4450;font-family:'Liberation Mono', monospace;">–</div>
<div class="t" style="left:744.10px;top:755.10px;font-size:10px;color:#2b3137;font-family:'Liberation Mono', monospace;letter-spacing:0.29px;">10:10</div>
<div class="t" style="left:803.20px;top:755.10px;font-size:10px;color:#2b3137;font-family:'Liberation Mono', monospace;letter-spacing:0.29px;">10:35</div>
<div class="b" style="left:782.25px;top:775.84px;width:14.50px;height:14.40px;background:#e3e6ea;border-radius:2px;"></div>
<div class="t" style="left:786.35px;top:779.35px;font-size:9px;color:#3b4450;font-family:'Liberation Mono', monospace;">–</div>
<div class="t" style="left:744.10px;top:779.78px;font-size:10px;color:#2b3137;font-family:'Liberation Mono', monospace;letter-spacing:0.29px;">10:35</div>
<div class="t" style="left:803.20px;top:779.78px;font-size:10px;color:#2b3137;font-family:'Liberation Mono', monospace;letter-spacing:0.29px;">11:00</div>
<div class="b" style="left:102.25px;top:812.86px;width:14.50px;height:14.40px;background:#e3e6ea;border-radius:2px;"></div>
<div class="t" style="left:106.35px;top:816.37px;font-size:9px;color:#3b4450;font-family:'Liberation Mono', monospace;">–</div>
<div class="t" style="left:64.10px;top:816.80px;font-size:10px;color:#2b3137;font-family:'Liberation Mono', monospace;letter-spacing:0.29px;">11:25</div>
<div class="t" style="left:123.20px;top:816.80px;font-size:10px;color:#2b3137;font-family:'Liberation Mono', monospace;letter-spacing:0.29px;">11:55</div>
<div class="b" style="left:102.25px;top:837.54px;width:14.50px;height:14.40px;background:#e3e6ea;border-radius:2px;"></div>
<div class="t" style="left:106.35px;top:841.05px;font-size:9px;color:#3b4450;font-family:'Liberation Mono', monospace;">–</div>
<div class="t" style="left:64.10px;top:841.48px;font-size:10px;color:#2b3137;font-family:'Liberation Mono', monospace;letter-spacing:0.29px;">11:55</div>
<div class="t" style="left:123.20px;top:841.48px;font-size:10px;color:#2b3137;font-family:'Liberation Mono', monospace;letter-spacing:0.29px;">12:25</div>
<div class="b" style="left:272.25px;top:800.52px;width:14.50px;height:14.40px;background:#e3e6ea;border-radius:2px;"></div>
<div class="t" style="left:276.35px;top:804.03px;font-size:9px;color:#3b4450;font-family:'Liberation Mono', monospace;">–</div>
<div class="t" style="left:234.10px;top:804.46px;font-size:10px;color:#2b3137;font-family:'Liberation Mono', monospace;letter-spacing:0.29px;">11:00</div>
<div class="t" style="left:293.20px;top:804.46px;font-size:10px;color:#2b3137;font-family:'Liberation Mono', monospace;letter-spacing:0.29px;">11:25</div>
<div class="b" style="left:272.25px;top:825.20px;width:14.50px;height:14.40px;background:#e3e6ea;border-radius:2px;"></div>
<div class="t" style="left:276.35px;top:828.71px;font-size:9px;color:#3b4450;font-family:'Liberation Mono', monospace;">–</div>
<div class="t" style="left:234.10px;top:829.14px;font-size:10px;color:#2b3137;font-family:'Liberation Mono', monospace;letter-spacing:0.29px;">11:25</div>
<div class="t" style="left:293.20px;top:829.14px;font-size:10px;color:#2b3137;font-family:'Liberation Mono', monospace;letter-spacing:0.29px;">11:50</div>
<div class="b" style="left:272.25px;top:849.88px;width:14.50px;height:14.40px;background:#e3e6ea;border-radius:2px;"></div>
<div class="t" style="left:276.35px;top:853.39px;font-size:9px;color:#3b4450;font-family:'Liberation Mono', monospace;">–</div>
<div class="t" style="left:234.10px;top:853.82px;font-size:10px;color:#2b3137;font-family:'Liberation Mono', monospace;letter-spacing:0.29px;">11:50</div>
<div class="t" style="left:293.20px;top:853.82px;font-size:10px;color:#2b3137;font-family:'Liberation Mono', monospace;letter-spacing:0.29px;">12:15</div>
<div class="b" style="left:442.25px;top:800.52px;width:14.50px;height:14.40px;background:#e3e6ea;border-radius:2px;"></div>
<div class="t" style="left:446.35px;top:804.03px;font-size:9px;color:#3b4450;font-family:'Liberation Mono', monospace;">–</div>
<div class="t" style="left:404.10px;top:804.46px;font-size:10px;color:#2b3137;font-family:'Liberation Mono', monospace;letter-spacing:0.29px;">11:00</div>
<div class="t" style="left:463.20px;top:804.46px;font-size:10px;color:#2b3137;font-family:'Liberation Mono', monospace;letter-spacing:0.29px;">11:25</div>
<div class="b" style="left:442.25px;top:825.20px;width:14.50px;height:14.40px;background:#e3e6ea;border-radius:2px;"></div>
<div class="t" style="left:446.35px;top:828.71px;font-size:9px;color:#3b4450;font-family:'Liberation Mono', monospace;">–</div>
<div class="t" style="left:404.10px;top:829.14px;font-size:10px;color:#2b3137;font-family:'Liberation Mono', monospace;letter-spacing:0.29px;">11:25</div>
<div class="t" style="left:463.20px;top:829.14px;font-size:10px;color:#2b3137;font-family:'Liberation Mono', monospace;letter-spacing:0.29px;">11:50</div>
<div class="b" style="left:442.25px;top:849.88px;width:14.50px;height:14.40px;background:#e3e6ea;border-radius:2px;"></div>
<div class="t" style="left:446.35px;top:853.39px;font-size:9px;color:#3b4450;font-family:'Liberation Mono', monospace;">–</div>
<div class="t" style="left:404.10px;top:853.82px;font-size:10px;color:#2b3137;font-family:'Liberation Mono', monospace;letter-spacing:0.29px;">11:50</div>
<div class="t" style="left:463.20px;top:853.82px;font-size:10px;color:#2b3137;font-family:'Liberation Mono', monospace;letter-spacing:0.29px;">12:15</div>
<div class="b" style="left:612.25px;top:800.52px;width:14.50px;height:14.40px;background:#e3e6ea;border-radius:2px;"></div>
<div class="t" style="left:616.35px;top:804.03px;font-size:9px;color:#3b4450;font-family:'Liberation Mono', monospace;">–</div>
<div class="t" style="left:574.10px;top:804.46px;font-size:10px;color:#2b3137;font-family:'Liberation Mono', monospace;letter-spacing:0.29px;">11:00</div>
<div class="t" style="left:633.20px;top:804.46px;font-size:10px;color:#2b3137;font-family:'Liberation Mono', monospace;letter-spacing:0.29px;">11:25</div>
<div class="b" style="left:612.25px;top:825.20px;width:14.50px;height:14.40px;background:#e3e6ea;border-radius:2px;"></div>
<div class="t" style="left:616.35px;top:828.71px;font-size:9px;color:#3b4450;font-family:'Liberation Mono', monospace;">–</div>
<div class="t" style="left:574.10px;top:829.14px;font-size:10px;color:#2b3137;font-family:'Liberation Mono', monospace;letter-spacing:0.29px;">11:25</div>
<div class="t" style="left:633.20px;top:829.14px;font-size:10px;color:#2b3137;font-family:'Liberation Mono', monospace;letter-spacing:0.29px;">11:50</div>
<div class="b" style="left:612.25px;top:849.88px;width:14.50px;height:14.40px;background:#e3e6ea;border-radius:2px;"></div>
<div class="t" style="left:616.35px;top:853.39px;font-size:9px;color:#3b4450;font-family:'Liberation Mono', monospace;">–</div>
<div class="t" style="left:574.10px;top:853.82px;font-size:10px;color:#2b3137;font-family:'Liberation Mono', monospace;letter-spacing:0.29px;">11:50</div>
<div class="t" style="left:633.20px;top:853.82px;font-size:10px;color:#2b3137;font-family:'Liberation Mono', monospace;letter-spacing:0.29px;">12:15</div>
<div class="b" style="left:782.25px;top:800.52px;width:14.50px;height:14.40px;background:#e3e6ea;border-radius:2px;"></div>
<div class="t" style="left:786.35px;top:804.03px;font-size:9px;color:#3b4450;font-family:'Liberation Mono', monospace;">–</div>
<div class="t" style="left:744.10px;top:804.46px;font-size:10px;color:#2b3137;font-family:'Liberation Mono', monospace;letter-spacing:0.29px;">11:00</div>
<div class="t" style="left:803.20px;top:804.46px;font-size:10px;color:#2b3137;font-family:'Liberation Mono', monospace;letter-spacing:0.29px;">11:25</div>
<div class="b" style="left:782.25px;top:825.20px;width:14.50px;height:14.40px;background:#e3e6ea;border-radius:2px;"></div>
<div class="t" style="left:786.35px;top:828.71px;font-size:9px;color:#3b4450;font-family:'Liberation Mono', monospace;">–</div>
<div class="t" style="left:744.10px;top:829.14px;font-size:10px;color:#2b3137;font-family:'Liberation Mono', monospace;letter-spacing:0.29px;">11:25</div>
<div class="t" style="left:803.20px;top:829.14px;font-size:10px;color:#2b3137;font-family:'Liberation Mono', monospace;letter-spacing:0.29px;">11:50</div>
<div class="b" style="left:782.25px;top:849.88px;width:14.50px;height:14.40px;background:#e3e6ea;border-radius:2px;"></div>
<div class="t" style="left:786.35px;top:853.39px;font-size:9px;color:#3b4450;font-family:'Liberation Mono', monospace;">–</div>
<div class="t" style="left:744.10px;top:853.82px;font-size:10px;color:#2b3137;font-family:'Liberation Mono', monospace;letter-spacing:0.29px;">11:50</div>
<div class="t" style="left:803.20px;top:853.82px;font-size:10px;color:#2b3137;font-family:'Liberation Mono', monospace;letter-spacing:0.29px;">12:15</div>
<div class="b" style="left:194.00px;top:522.80px;width:1.00px;height:377.20px;background:#dde0e3;"></div>
<div class="b" style="left:364.00px;top:522.80px;width:1.00px;height:377.20px;background:#dde0e3;"></div>
<div class="b" style="left:534.00px;top:522.80px;width:1.00px;height:377.20px;background:#dde0e3;"></div>
<div class="b" style="left:704.00px;top:522.80px;width:1.00px;height:377.20px;background:#dde0e3;"></div>
<div class="b" style="left:874.00px;top:522.80px;width:1.00px;height:377.20px;background:#dde0e3;"></div>
<div class="b" style="left:960.80px;top:522.80px;width:1.00px;height:377.20px;background:#dde0e3;"></div>
<div class="b" style="left:1071.00px;top:49.00px;width:338.00px;height:539.00px;background:#fff;border:1px solid #dde0e3;border-radius:4px;"></div>
<div class="b" style="left:1072.00px;top:539.00px;width:336.00px;height:48.00px;background:#fafafa;border-top:1px solid #dde0e3;border-radius:0 0 3px 3px;"></div>
<div class="t" style="left:1087.60px;top:65.71px;font-size:11.8px;color:#262b32;font-weight:700;">Fulfilment Times</div>
<div class="b" style="left:1087.00px;top:92.00px;width:12.00px;height:12.00px;background:#3372b6;border-radius:2px;"></div>
<svg style="left:1087px;top:92px" width="12" height="12" viewBox="0 0 12 12"><path d="M3.1 6.1L5.1 8L8.9 4" stroke="#fff" stroke-width="1.5" fill="none" stroke-linecap="round" stroke-linejoin="round"/></svg>
<div class="t" style="left:1107.00px;top:92.83px;font-size:10.6px;color:#1d2127;">Allow ASAP Orders</div>
<div class="t" style="left:1087.00px;top:124.82px;font-size:10.85px;color:#1d2127;">Standard Delivery Time <span style="color:#5b6c80">(minutes)</span></div>
<div class="b" style="left:1087.00px;top:145.00px;width:306.00px;height:5.00px;background:#eceef1;border-radius:3px;"></div>
<div class="b" style="left:1087.00px;top:145.00px;width:64.00px;height:5.00px;background:#8fb9dd;border-radius:3px 0 0 3px;"></div>
<div class="b" style="left:1145.20px;top:142.10px;width:11.60px;height:11.60px;background:#dfe4ea;border-radius:2px;"></div>
<div class="t" style="left:1072.00px;width:30.00px;text-align:center;top:158.63px;font-size:9.3px;color:#a2a8af;">0</div>
<div class="t" style="left:1123.00px;width:30.00px;text-align:center;top:158.63px;font-size:9.3px;color:#a2a8af;">20</div>
<div class="t" style="left:1174.00px;width:30.00px;text-align:center;top:158.63px;font-size:9.3px;color:#a2a8af;">40</div>
<div class="t" style="left:1225.00px;width:30.00px;text-align:center;top:158.63px;font-size:9.3px;color:#a2a8af;">60</div>
<div class="t" style="left:1276.00px;width:30.00px;text-align:center;top:158.63px;font-size:9.3px;color:#a2a8af;">80</div>
<div class="t" style="left:1327.00px;width:30.00px;text-align:center;top:158.63px;font-size:9.3px;color:#a2a8af;">100</div>
<div class="t" style="left:1378.00px;width:30.00px;text-align:center;top:158.63px;font-size:9.3px;color:#a2a8af;">120</div>
<div class="b" style="left:1142.00px;top:157.10px;width:17.70px;height:11.60px;background:#99a1a9;border-radius:2px;"></div>
<div class="t" style="left:1142.00px;width:17.70px;text-align:center;top:158.50px;font-size:9.8px;color:#fff;font-weight:700;">25</div>
<div class="t" style="left:1087.00px;top:175.99px;font-size:9.46px;color:#5b6c80;">Delivery times now use windows and are no longer required.</div>
<div class="t" style="left:1087.00px;top:199.17px;font-size:10.9px;color:#1d2127;">Prep / Collection Time <span style="color:#5b6c80">(minutes)</span></div>
<div class="b" style="left:1087.00px;top:219.00px;width:306.00px;height:5.00px;background:#dde1e6;border-radius:3px;"></div>
<div class="b" style="left:1087.00px;top:219.00px;width:64.00px;height:5.00px;background:#3270b4;border-radius:3px 0 0 3px;"></div>
<div class="t" style="left:1072.00px;width:30.00px;text-align:center;top:233.13px;font-size:9.3px;color:#1d2127;">0</div>
<div class="t" style="left:1123.00px;width:30.00px;text-align:center;top:233.13px;font-size:9.3px;color:#1d2127;">20</div>
<div class="t" style="left:1174.00px;width:30.00px;text-align:center;top:233.13px;font-size:9.3px;color:#1d2127;">40</div>
<div class="t" style="left:1225.00px;width:30.00px;text-align:center;top:233.13px;font-size:9.3px;color:#1d2127;">60</div>
<div class="t" style="left:1276.00px;width:30.00px;text-align:center;top:233.13px;font-size:9.3px;color:#1d2127;">80</div>
<div class="t" style="left:1327.00px;width:30.00px;text-align:center;top:233.13px;font-size:9.3px;color:#1d2127;">100</div>
<div class="t" style="left:1378.00px;width:30.00px;text-align:center;top:233.13px;font-size:9.3px;color:#1d2127;">120</div>
<div class="b" style="left:1144.50px;top:214.50px;width:13.20px;height:12.80px;background:linear-gradient(#fff,#f3f4f6);border:1px solid #d3d7dc;border-radius:3px;box-shadow:0 1px 2px rgba(0,0,0,0.08);"></div>
<div class="b" style="left:1142.20px;top:230.00px;width:17.80px;height:11.60px;background:#394555;border-radius:2px;box-shadow:0 1px 3px rgba(0,0,0,0.15);"></div>
<div class="t" style="left:1142.20px;width:17.80px;text-align:center;top:231.90px;font-size:9.8px;color:#fff;font-weight:700;">25</div>
<div class="t" style="left:1087.00px;top:249.87px;font-size:9.6px;color:#5b6c80;">Time needed to prepare the order before pickup.</div>
<div class="t" style="left:1087.60px;top:286.35px;font-size:11.64px;color:#262b32;font-weight:700;">Preordering</div>
<div class="b" style="left:1087.30px;top:312.30px;width:11.50px;height:11.50px;background:#f7f8fa;border:1px solid #ccd1d7;border-radius:2px;"></div>
<div class="t" style="left:1106.50px;top:312.83px;font-size:10.6px;color:#1d2127;">No Preorders Before Opening</div>
<div class="t" style="left:1087.60px;top:346.00px;font-size:10.63px;color:#1d2127;">Days Offered</div>
<div class="b" style="left:1087.00px;top:366.00px;width:306.00px;height:4.00px;background:#dde1e6;border-radius:2px;"></div>
<div class="b" style="left:1087.70px;top:366.00px;width:75.80px;height:4.00px;background:#3573b9;"></div>
<div class="b" style="left:1080.50px;top:361.40px;width:7.20px;height:13.10px;background:linear-gradient(#fff,#f3f4f6);border:1px solid #d3d7dc;border-radius:3px;box-shadow:0 1px 2px rgba(0,0,0,0.08);"></div>
<div class="b" style="left:1163.50px;top:361.40px;width:7.10px;height:13.10px;background:linear-gradient(#fff,#f3f4f6);border:1px solid #d3d7dc;border-radius:3px;box-shadow:0 1px 2px rgba(0,0,0,0.08);"></div>
<div class="b" style="left:1081.00px;top:377.20px;width:12.00px;height:11.80px;background:#394555;border-radius:2px;box-shadow:0 1px 3px rgba(0,0,0,0.15);"></div>
<div class="t" style="left:1081.00px;width:12.00px;text-align:center;top:378.60px;font-size:9.8px;color:#fff;font-weight:700;">1</div>
<div class="b" style="left:1157.80px;top:377.20px;width:11.60px;height:11.80px;background:#394555;border-radius:2px;box-shadow:0 1px 3px rgba(0,0,0,0.15);"></div>
<div class="t" style="left:1157.80px;width:11.60px;text-align:center;top:378.60px;font-size:9.8px;color:#fff;font-weight:700;">2</div>
<div class="t" style="left:1225.00px;width:30.00px;text-align:center;top:379.13px;font-size:9.3px;color:#1d2127;">3</div>
<div class="t" style="left:1301.50px;width:30.00px;text-align:center;top:379.13px;font-size:9.3px;color:#1d2127;">4</div>
<div class="t" style="left:1378.00px;width:30.00px;text-align:center;top:379.13px;font-size:9.3px;color:#1d2127;">5</div>
<div class="t" style="left:1087.00px;top:396.96px;font-size:9.5px;color:#5b6c80;">How many days in advance a customer can preorder</div>
<div class="t" style="left:1088.00px;top:432.89px;font-size:11.71px;color:#262b32;font-weight:700;">Table Ordering</div>
<div class="t" style="left:1087.40px;top:454.63px;font-size:10.83px;color:#1d2127;">Autocomplete Table Orders</div>
<div class="b" style="left:1087.00px;top:474.70px;width:306.00px;height:4.30px;background:#dde1e6;border-radius:2px;"></div>
<div class="b" style="left:1080.60px;top:470.30px;width:13.00px;height:13.10px;background:linear-gradient(#fff,#f3f4f6);border:1px solid #d3d7dc;border-radius:3px;box-shadow:0 1px 2px rgba(0,0,0,0.08);"></div>
<div class="b" style="left:1076.50px;top:486.10px;width:21.10px;height:11.60px;background:#394555;border-radius:2px;box-shadow:0 1px 3px rgba(0,0,0,0.15);"></div>
<div class="t" style="left:1076.50px;width:21.10px;text-align:center;top:487.76px;font-size:9.5px;color:#fff;font-weight:700;">Off</div>
<div class="t" style="left:1115.71px;width:30.00px;text-align:center;top:488.03px;font-size:9.3px;color:#1d2127;">0</div>
<div class="t" style="left:1159.42px;width:30.00px;text-align:center;top:488.03px;font-size:9.3px;color:#1d2127;">10</div>
<div class="t" style="left:1203.13px;width:30.00px;text-align:center;top:488.03px;font-size:9.3px;color:#1d2127;">20</div>
<div class="t" style="left:1246.84px;width:30.00px;text-align:center;top:488.03px;font-size:9.3px;color:#1d2127;">30</div>
<div class="t" style="left:1290.55px;width:30.00px;text-align:center;top:488.03px;font-size:9.3px;color:#1d2127;">40</div>
<div class="t" style="left:1334.26px;width:30.00px;text-align:center;top:488.03px;font-size:9.3px;color:#1d2127;">50</div>
<div class="t" style="left:1377.97px;width:30.00px;text-align:center;top:488.03px;font-size:9.3px;color:#1d2127;">60</div>
<div class="t" style="left:1087.00px;top:505.76px;font-size:9.5px;color:#5b6c80;">After how many minutes should a table order be automatically</div>
<div class="t" style="left:1087.00px;top:517.16px;font-size:9.5px;color:#5b6c80;">completed</div>
<div class="b" style="left:1087.30px;top:552.40px;width:37.70px;height:22.60px;background:linear-gradient(#fff,#f6f7f9);border:1px solid #d3d7dc;border-bottom-color:#c3c8ce;border-radius:2px;"></div>
<div class="t" style="left:1094.50px;top:559.03px;font-size:10px;color:#1d2127;">Save</div>
</body></html>
